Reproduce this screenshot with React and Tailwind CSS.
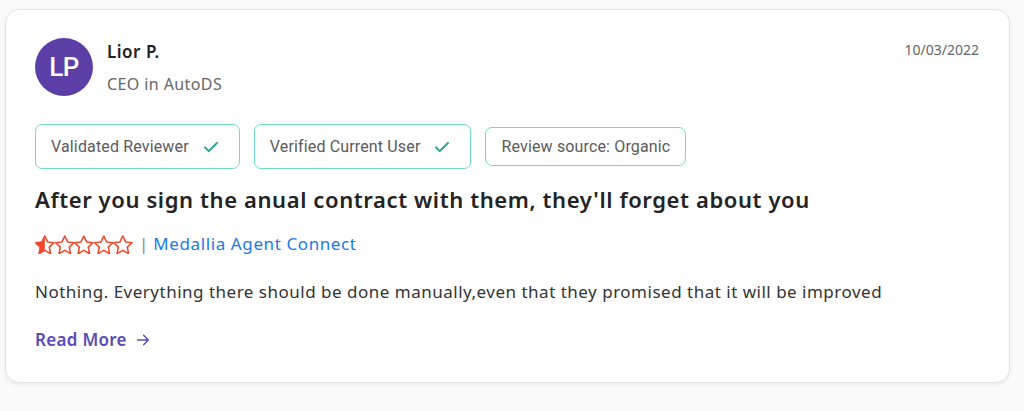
import React from 'react';

const badges = [
  { label: 'Validated Reviewer', check: true },
  { label: 'Verified Current User', check: true },
  { label: 'Review source: Organic', check: false },
];

const starPath = 'M12 2.5l2.9 6.1 6.6.8-4.9 4.6 1.3 6.6L12 17.3l-5.9 3.3 1.3-6.6-4.9-4.6 6.6-.8z';

const Star = ({ half }) => (
  <svg width="19.6" height="19" viewBox="2 1.5 20 19.5" className="shrink-0">
    <defs>
      <clipPath id="halfclip">
        <rect x="0" y="0" width="12" height="24" />
      </clipPath>
    </defs>
    {half && <path d={starPath} fill="#f2482a" clipPath="url(#halfclip)" />}
    <path d={starPath} fill="none" stroke="#f2482a" strokeWidth="1.6" strokeLinejoin="round" />
  </svg>
);

const Check = () => (
  <svg width="18" height="18" viewBox="0 0 24 24" fill="none" stroke="#1fa58a" strokeWidth="2.6" strokeLinecap="round" strokeLinejoin="round">
    <path d="M4 12.5l5 5L20 6.5" />
  </svg>
);

export default function App() {
  return (
    <div className="w-[1024px] h-[411px] bg-[#fafafa] pt-[9px] pl-[5px]" style={{ fontFamily: '"Noto Sans", sans-serif' }}>
      <div className="w-[1005px] h-[374px] bg-white border border-[#e4e4e4] rounded-[14px] shadow-[0_2px_4px_rgba(0,0,0,0.06)] pl-[29px] pr-[28px] pt-[28px]">
        {/* Header */}
        <div className="flex justify-between">
          <div className="flex items-start gap-[14px]">
            <div className="w-[58px] h-[58px] rounded-full bg-[#5b3ea6] flex items-center justify-center text-white text-[26px] font-medium tracking-tight" style={{ fontFamily: 'Roboto, sans-serif' }}>
              LP
            </div>
            <div className="pt-[3px]">
              <div className="text-[17px] font-semibold text-[#222] leading-[22px] tracking-[0.5px]">Lior P.</div>
              <div className="text-[16px] text-[#666] mt-[10px] leading-[22px] tracking-[0.4px]">CEO in AutoDS</div>
            </div>
          </div>
          <div className="text-[14px] text-[#666] pt-[1px] pr-[2px]">10/03/2022</div>
        </div>

        {/* Badges */}
        <div className="flex items-center gap-[14px] mt-[28px] tracking-[0.15px]" style={{ fontFamily: 'Roboto, sans-serif' }}>
          {badges.map((b) => (
            <div
              key={b.label}
              className={`flex items-center gap-[13px] border border-[#6fdcc3] rounded-[7px] pl-[15px] text-[16px] text-[#5b5b5b] ${b.check ? 'h-[45px] pr-[19px]' : 'h-[39px] pr-[15px]'}`}
            >
              <span>{b.label}</span>
              {b.check && <Check />}
            </div>
          ))}
        </div>

        {/* Title */}
        <h2 className="text-[22px] font-semibold text-[#232323] mt-[14px] leading-[32px] tracking-[0.6px]">
          After you sign the anual contract with them, they'll forget about you
        </h2>

        {/* Rating */}
        <div className="flex items-center mt-[17px] h-[24px]">
          <div className="flex">
            <Star half />
            <Star />
            <Star />
            <Star />
            <Star />
          </div>
          <span className="text-[#888] text-[17px] ml-[6px] mr-[5px]">|</span>
          <span className="text-[17px] text-[#1a7ae8] tracking-[0.6px]">Medallia Agent Connect</span>
        </div>

        {/* Body */}
        <p className="text-[17px] text-[#333] mt-[24px] leading-[24px] tracking-[0.5px]">
          Nothing. Everything there should be done manually,even that they promised that it will be improved
        </p>

        <div className="flex items-center gap-[8px] mt-[23px] text-[17px] font-semibold text-[#5b4bb8] tracking-[0.3px]">
          Read More
          <svg width="16" height="16" viewBox="0 0 24 24" fill="none" stroke="#5b4bb8" strokeWidth="2.2" strokeLinecap="round" strokeLinejoin="round">
            <path d="M4 12h16M13 5l7 7-7 7" />
          </svg>
        </div>
      </div>
    </div>
  );
}
